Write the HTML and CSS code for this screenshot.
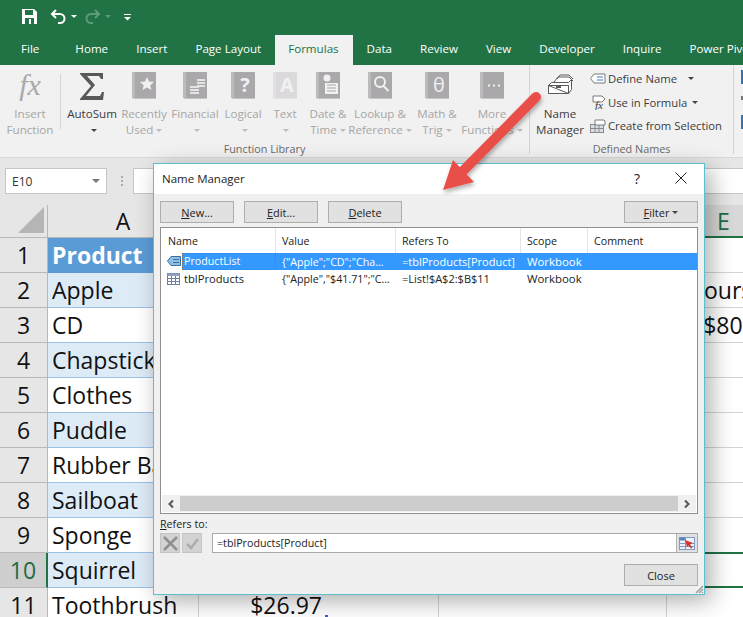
FILE: index.html
```html
<!DOCTYPE html>
<html lang="en">
<head>
<meta charset="utf-8">
<title>Name Manager</title>
<link rel="stylesheet" href="styles.css">
</head>
<body>
<header class="titlebar">
  <svg class="qa" width="140" height="35" viewBox="0 0 140 35">
    <path d="M22 9h12l3 3v12H22z" fill="#fff"/>
    <rect x="25" y="10" width="8" height="5" fill="#217346"/>
    <rect x="25" y="18" width="9" height="6" fill="#217346"/>
    <rect x="29" y="19" width="2" height="5" fill="#fff"/>
    <path d="M56 10l-4 4 4 4M52 14h8a4.500 4.500 0 0 1 0 9h-2" fill="none" stroke="#fff" stroke-width="2"/>
    <path d="M71 15h6l-3 3z" fill="#fff"/>
    <path d="M95 10l4 4-4 4M99 14h-8a4.500 4.500 0 0 0 0 9h2" fill="none" stroke="#5c9c78" stroke-width="2"/>
    <path d="M105 15h6l-3 3z" fill="#5c9c78"/>
    <rect x="124" y="14" width="7" height="1" fill="#fff"/>
    <path d="M124 17h7l-3.500 3.500z" fill="#fff"/>
  </svg>
  <nav class="tabs">
    <span class="tab tab-file">File</span>
    <span class="tab">Home</span>
    <span class="tab">Insert</span>
    <span class="tab">Page Layout</span>
    <span class="tab tab-active">Formulas</span>
    <span class="tab">Data</span>
    <span class="tab">Review</span>
    <span class="tab">View</span>
    <span class="tab">Developer</span>
    <span class="tab">Inquire</span>
    <span class="tab">Power Pivot</span>
  </nav>
</header>

<svg class="defs" width="0" height="0">
  <symbol id="book" viewBox="0 0 25 28">
    <rect x="0" y="0" width="3" height="26" fill="currentColor" opacity=".75"/>
    <rect x="3" y="0" width="21" height="26" fill="currentColor"/>
    <rect x="1" y="26" width="23" height="1" fill="currentColor" opacity=".6"/>
  </symbol>
</svg>

<section class="ribbon">
  <div class="group group-lib">
    <div class="buttons">
      <div class="big w-insert">
        <span class="fx">fx</span>
        <span class="lbl">Insert<br>Function</span>
      </div>
      <i class="sep-in"></i>
      <div class="big w-auto on">
        <svg class="ic" width="26" height="28" viewBox="0 0 26 28"><path d="M1 1h23v6h-2l-2-3H8l8 9-9 11h14l2-4h2l-1 8H1v-1l11-13L1 2z" fill="#595959"/></svg>
        <span class="lbl">AutoSum<br><b class="caret dark"></b></span>
      </div>
      <div class="big w-rec">
        <svg class="ic book" width="25" height="28" viewBox="0 0 25 28"><use href="#book"/><path d="M15 5l2 4.500 5 .5-3.700 3.200 1.100 4.800-4.400-2.600-4.400 2.600 1.100-4.800L8 10l5-.5z" fill="#f1f1f1"/></svg>
        <span class="lbl">Recently<br>Used<b class="caret"></b></span>
      </div>
      <div class="big w-fin">
        <svg class="ic book" width="25" height="28" viewBox="0 0 25 28"><use href="#book"/><path d="M14 7h8v2h-8zM14 10h8v2h-8zM14 13h8v2h-8zM7 14h9v2H7zM7 17h9v2H7zM7 20h9v2H7z" fill="#e4e4e4"/></svg>
        <span class="lbl">Financial<br><b class="caret"></b></span>
      </div>
      <div class="big w-log">
        <svg class="ic book" width="25" height="28" viewBox="0 0 25 28"><use href="#book"/><text x="14" y="20" class="ic-txt">?</text></svg>
        <span class="lbl">Logical<br><b class="caret"></b></span>
      </div>
      <div class="big w-text">
        <svg class="ic book light" width="25" height="28" viewBox="0 0 25 28"><use href="#book"/><text x="14" y="20" class="ic-txt">A</text></svg>
        <span class="lbl">Text<br><b class="caret"></b></span>
      </div>
      <div class="big w-date">
        <svg class="ic book" width="25" height="28" viewBox="0 0 25 28"><use href="#book"/><circle cx="11" cy="6" r="3.500" fill="#f1f1f1"/><rect x="9" y="11" width="13" height="11" fill="#f1f1f1"/><path d="M11 13h9M11 16h9M11 19h9" stroke="#a8a8a8"/></svg>
        <span class="lbl">Date &amp;<br>Time<b class="caret"></b></span>
      </div>
      <div class="big w-look">
        <svg class="ic book" width="25" height="28" viewBox="0 0 25 28"><use href="#book"/><circle cx="12" cy="10" r="5" fill="none" stroke="#f1f1f1" stroke-width="2"/><path d="M15.500 14l5 5" stroke="#f1f1f1" stroke-width="2"/></svg>
        <span class="lbl">Lookup &amp;<br>Reference<b class="caret"></b></span>
      </div>
      <div class="big w-math">
        <svg class="ic book" width="25" height="28" viewBox="0 0 25 28"><use href="#book"/><text x="14" y="20" class="ic-txt thin">θ</text></svg>
        <span class="lbl">Math &amp;<br>Trig<b class="caret"></b></span>
      </div>
      <div class="big w-more">
        <svg class="ic book" width="25" height="28" viewBox="0 0 25 28"><use href="#book"/><path d="M8 13.500h2M13 13.500h2M18 13.500h2" stroke="#f1f1f1" stroke-width="2"/></svg>
        <span class="lbl">More<br>Functions<b class="caret"></b></span>
      </div>
    </div>
    <div class="group-label">Function Library</div>
  </div>
  <div class="group group-names">
    <div class="buttons">
      <div class="big w-name on">
        <svg class="ic" width="30" height="28" viewBox="0 0 30 28"><path d="M3.500 13.500h20v8h-20zM3.500 13.500l3-3h17l3-3v10l-3 4zM9 10l4-5h11l4 4M12 7l3-4h9l4 4" fill="#fff" stroke="#595959"/><rect x="11" y="14" width="5" height="2" fill="#595959"/></svg>
        <span class="lbl">Name<br>Manager</span>
      </div>
      <ul class="small-list">
        <li class="small">
          <svg width="16" height="12" viewBox="0 0 16 12"><path d="M4 1h11v9H4L.5 5.500z" fill="#fff" stroke="#7a7a7a"/><path d="M7 4h6M7 7h6" stroke="#3a78c2"/></svg>
          <span>Define Name</span><b class="caret dark gap"></b>
        </li>
        <li class="small">
          <svg width="16" height="15" viewBox="0 0 16 15"><path d="M3 1h9l3 3-3 3H3z" fill="#fff" stroke="#7a7a7a"/><text x="5" y="14" class="mini-fx">fx</text></svg>
          <span>Use in Formula</span><b class="caret dark"></b>
        </li>
        <li class="small">
          <svg width="16" height="14" viewBox="0 0 16 14"><rect x=".5" y="5.500" width="13" height="8" fill="#d9dfe6" stroke="#8a8a8a"/><path d="M5 5.500v8M9 5.500v8M.5 9.500h13" stroke="#8a8a8a"/><path d="M5 1h9l1 1v4H5z" fill="#fff" stroke="#7a7a7a"/></svg>
          <span>Create from Selection</span>
        </li>
      </ul>
    </div>
    <div class="group-label">Defined Names</div>
  </div>
  <div class="group group-cut">
    <i class="blue-a"></i><i class="blue-b"></i><i class="blue-c"></i>
  </div>
</section>

<section class="formula-bar">
  <div class="name-box"><span>E10</span><b class="caret grey"></b></div>
  <i class="grip"></i>
  <div class="formula-input"></div>
</section>

<section class="sheet">
  <div class="col-head corner"><i></i></div><div class="col-head">A</div><div class="col-head"></div><div class="col-head"></div><div class="col-head sel-col">E</div>

  <div class="row-head">1</div><div class="cell th">Product</div><div class="cell"></div><div class="cell"></div><div class="cell"></div>
  <div class="row-head">2</div><div class="cell band">Apple</div><div class="cell"></div><div class="cell"></div><div class="cell hours">Hours</div>
  <div class="row-head">3</div><div class="cell plain">CD</div><div class="cell"></div><div class="cell"></div><div class="cell num">$80.00</div>
  <div class="row-head">4</div><div class="cell band">Chapstick</div><div class="cell"></div><div class="cell"></div><div class="cell"></div>
  <div class="row-head">5</div><div class="cell plain">Clothes</div><div class="cell"></div><div class="cell"></div><div class="cell"></div>
  <div class="row-head">6</div><div class="cell band">Puddle</div><div class="cell"></div><div class="cell"></div><div class="cell"></div>
  <div class="row-head">7</div><div class="cell plain">Rubber Ball</div><div class="cell"></div><div class="cell"></div><div class="cell"></div>
  <div class="row-head">8</div><div class="cell band">Sailboat</div><div class="cell"></div><div class="cell"></div><div class="cell"></div>
  <div class="row-head">9</div><div class="cell plain">Sponge</div><div class="cell"></div><div class="cell"></div><div class="cell above-sel"></div>
  <div class="row-head sel-row">10</div><div class="cell band">Squirrel</div><div class="cell"></div><div class="cell"></div><div class="cell selected"></div>
  <div class="row-head">11</div><div class="cell plain">Toothbrush</div><div class="cell num price">$26.97<i class="handle"></i></div><div class="cell"></div><div class="cell"></div>
</section>

<div class="dialog">
  <div class="dlg-title">
    <span class="dlg-name">Name Manager</span>
    <span class="dlg-help">?</span>
    <svg class="dlg-close" width="12" height="12" viewBox="0 0 12 12"><path d="M.5.500l11 11M11.500.500l-11 11" stroke="#222" fill="none"/></svg>
  </div>
  <div class="dlg-body">
    <div class="dlg-actions">
      <span class="btn"><u>N</u>ew...</span>
      <span class="btn"><u>E</u>dit...</span>
      <span class="btn"><u>D</u>elete</span>
      <span class="btn btn-filter"><u>F</u>ilter<b class="caret dark"></b></span>
    </div>
    <div class="list">
      <div class="list-row list-head">
        <span class="c1">Name</span><span class="c2">Value</span><span class="c3">Refers To</span><span class="c4">Scope</span><span class="c5">Comment</span>
      </div>
      <div class="list-row item active">
        <svg class="item-ic" width="14" height="10" viewBox="0 0 14 10"><path d="M4 .5h9.500v9H4L.5 5z" fill="#8cc0e8" stroke="#3f6f96"/><path d="M6 3.500h6M6 6.500h6" stroke="#3f6f96"/></svg>
        <span class="c1 sel-name">ProductList</span><span class="c2">{"Apple";"CD";"Cha...</span><span class="c3">=tblProducts[Product]</span><span class="c4">Workbook</span><span class="c5"></span>
      </div>
      <div class="list-row item">
        <svg class="item-ic" width="13" height="12" viewBox="0 0 13 12"><rect x=".5" y=".5" width="12" height="11" fill="#fff" stroke="#6b7fa0"/><rect x=".5" y=".5" width="12" height="2.500" fill="#8fa3c4"/><path d="M4.500 3v8M8.500 3v8M1 5.500h11M1 8.500h11" stroke="#6b7fa0"/></svg>
        <span class="c1 wide">tblProducts</span><span class="c2">{"Apple","$41.71";"C...</span><span class="c3">=List!$A$2:$B$11</span><span class="c4">Workbook</span><span class="c5"></span>
      </div>
      <div class="hscroll">
        <svg width="18" height="16" viewBox="0 0 18 16"><path d="M11 4.500L7.500 8 11 11.500" fill="none" stroke="#555" stroke-width="2"/></svg>
        <i class="thumb"></i>
        <svg width="18" height="16" viewBox="0 0 18 16"><path d="M7 4.500L10.500 8 7 11.500" fill="none" stroke="#555" stroke-width="2"/></svg>
      </div>
    </div>
    <div class="refers-label"><u>R</u>efers to:</div>
    <div class="refers">
      <span class="tool"><svg width="15" height="15" viewBox="0 0 15 15"><path d="M1 1l13 13M14 1L1 14" stroke="#8f8f8f" stroke-width="2.500"/></svg></span>
      <span class="tool"><svg width="15" height="15" viewBox="0 0 15 15"><path d="M2 8l4 4 7-9" fill="none" stroke="#adadad" stroke-width="2.500"/></svg></span>
      <div class="ref-input">
        <span>=tblProducts[Product]</span>
        <span class="ref-btn"><svg width="16" height="13" viewBox="0 0 16 13"><rect x=".5" y=".5" width="15" height="12" fill="#eef2f8" stroke="#7f9ac8"/><rect x=".5" y=".5" width="6" height="3" fill="#5b7fc0"/><path d="M1 6.500h14M1 9.500h14M6.500 1v11" stroke="#7f9ac8"/><path d="M6 3l8 3-3 1.500 2.500 3-1.500 1-2.500-3L8 10z" fill="#d9352a"/></svg></span>
      </div>
    </div>
    <div class="dlg-foot"><span class="btn">Close</span></div>
    <svg class="size-grip" width="10" height="10" viewBox="0 0 10 10"><path d="M9 2L2 9M9 5L5 9M9 8L8 9" stroke="#a0a0a0" stroke-width="1.500"/></svg>
  </div>
</div>

<svg class="arrow" width="743" height="220" viewBox="0 0 743 220">
  <defs><filter id="ash" x="-20%" y="-20%" width="150%" height="150%"><feDropShadow dx="1" dy="3" stdDeviation="2" flood-color="#000" flood-opacity=".3"/></filter></defs>
  <g filter="url(#ash)">
    <path d="M536 97L463 171" stroke="#e9504a" stroke-width="10" stroke-linecap="round" fill="none"/>
    <path d="M443 190L453 160 474 182z" fill="#e9504a"/>
  </g>
</svg>
</body>
</html>
```
FILE: styles.css
```css
* { box-sizing: border-box; }
html, body { margin: 0; height: 617px; width: 743px; overflow: hidden; }
body { position: relative; font-family: "Open Sans", "Liberation Sans", sans-serif; background: #fff; color: #222; }
ul { list-style: none; margin: 0; padding: 0; }
.defs { position: absolute; }

/* title + tabs */
.titlebar { height: 65px; background: #217346; display: flex; flex-direction: column; }
.qa { display: block; flex: none; height: 35px; }
.tabs { display: flex; height: 30px; color: #fff; font-size: 11.6px; white-space: nowrap; }
.tab { padding: 6px 14px 0; }
.tab-file { padding-left: 21px; padding-right: 22px; }
.tab-active { background: #f1f1f1; color: #217346; padding: 6px 14px 0 13px; }

/* ribbon */
.ribbon { height: 93px; background: #f1f1f1; border-bottom: 1px solid #d8d8d8; display: flex; font-size: 11.6px; color: #a6a6a6; }
.group { display: flex; flex-direction: column; position: relative; padding-bottom: 2px; }
.group-lib { width: 530px; border-right: 1px solid #d4d4d4; margin-bottom: 3px; padding-top: 7px; }
.group-names { width: 204px; border-right: 1px solid #d4d4d4; margin-bottom: 3px; padding-top: 7px; }
.buttons { display: flex; height: 70px; }
.group-label { text-align: center; color: #6a6a6a; font-size: 10.8px; line-height: 14px; margin-top: 4px; }
.big { display: flex; flex-direction: column; align-items: center; flex: none; }
.ic { display: block; height: 28px; flex: none; }
.fx { height: 28px; font: italic 30px/26px "Liberation Serif", serif; color: #a9a9a9; }
.lbl { margin-top: 6px; text-align: center; line-height: 16px; white-space: nowrap; }
.on .lbl { color: #3c3c3c; }
.w-insert { width: 60px; }
.sep-in { width: 1px; height: 55px; margin-top: 2px; background: #d4d4d4; flex: none; }
.w-auto { width: 62px; }
.w-rec { width: 42px; }
.w-fin { width: 60px; }
.w-log { width: 36px; }
.w-text { width: 48px; }
.w-date { width: 38px; }
.w-look { width: 66px; }
.w-math { width: 48px; }
.w-more { width: 62px; }
.w-name { width: 60px; }
.book { color: #aaa8aa; }
.book.light { color: #dcd9dc; }
.ic-txt { font: bold 20px "Open Sans", sans-serif; fill: #f1f1f1; text-anchor: middle; }
.ic-txt.thin { font-weight: 400; }
.mini-fx { font: italic 11px "Liberation Serif", serif; fill: #333; }
.caret { display: inline-block; width: 0; height: 0; border: 3px solid transparent; border-top: 3px solid #bcbcbc; border-bottom: 0; margin-left: 3px; vertical-align: middle; }
.caret.dark { border-top-color: #444; }
.caret.grey { border-top-color: #777; border-width: 4px 4px 0; }
.caret.gap { margin-left: 9px; }
.small-list { display: flex; flex-direction: column; gap: 4.5px; color: #3c3c3c; margin-top: -3px; font-size: 11.3px; }
.small { display: flex; align-items: center; gap: 2px; height: 19px; white-space: nowrap; }
.small svg { flex: none; }
.group-cut { width: 9px; }
.group-cut i { position: absolute; left: 7px; background: #2f75b5; width: 3px; }
.blue-a { top: 5px; height: 14px; }
.blue-b { top: 31px; height: 4px; background: #777 !important; }
.blue-c { top: 50px; height: 14px; }

/* formula bar */
.formula-bar { height: 47px; background: #e6e6e6; display: flex; align-items: flex-start; padding: 10px 0 0 5px; }
.name-box { width: 102px; height: 26px; background: #fff; border: 1px solid #c6c6c6; display: flex; align-items: center; justify-content: space-between; padding: 0 6px; font-size: 12px; color: #333; }
.grip { width: 2px; height: 10px; margin: 8px 10px 0 14px; border-left: 2px dotted #aaa; }
.formula-input { flex: 1; height: 26px; background: #fff; border: 1px solid #c6c6c6; border-right: 0; }

/* sheet */
.sheet { display: grid; grid-template-columns: 48px 151px 240px 228px 114px; grid-template-rows: 33px repeat(11, 35px); font-size: 23px; color: #111; }
.col-head, .row-head { background: #e6e6e6; display: flex; align-items: center; justify-content: center; border-right: 1px solid #b8b8b8; border-bottom: 1px solid #b8b8b8; }
.corner { position: relative; padding: 0; }
.corner i { position: absolute; right: 3px; bottom: 4px; width: 0; height: 0; border-style: solid; border-width: 0 0 26px 26px; border-color: transparent transparent #b5b5b5 transparent; }
.sel-col { background: #d8d8d8; color: #1f6b43; border-bottom: 2px solid #217346; justify-content: flex-start; padding-left: 50px; }
.sel-row { background: #cfcfcf; color: #1f6b43; border-right: 2px solid #217346; }
.cell { border-right: 1px solid #d4d4d4; border-bottom: 1px solid #d4d4d4; display: flex; align-items: center; padding: 0 0 0 4px; white-space: nowrap; overflow: visible; }
.th { background: #5b9bd5; color: #fff; font-weight: 700; border-color: #5b9bd5; }
.band { background: #ddebf7; border-color: #9bc2e6; border-right-color: #ddebf7; }
.plain { border-bottom-color: #9bc2e6; }
.num { justify-content: flex-end; padding: 0 5px 0 0; }
.price { padding-right: 116px; position: relative; }
.handle { position: absolute; left: 126px; top: 27px; width: 3px; height: 3px; background: #3f5fbf; }
.hours { padding-left: 20px; }
.above-sel { border-bottom: 0; }
.selected { border-top: 2px solid #217346; border-bottom: 2px solid #217346; border-right: 0; height: 36px; margin-top: -1px; }

/* dialog */
.dialog { position: absolute; left: 153px; top: 163px; width: 552px; height: 432px; border: 1px solid #5cbfcc; background: #f0f0f0; box-shadow: 6px 6px 22px rgba(0, 0, 0, .32); display: flex; flex-direction: column; font-size: 10.7px; color: #222; }
.dlg-title { height: 30px; background: #fff; flex: none; display: flex; align-items: center; padding: 0 17px 2px 8px; font-size: 11.5px; }
.dlg-name { flex: 1; }
.dlg-help { font-size: 14px; margin-right: 35px; }
.dlg-body { flex: 1; position: relative; display: flex; flex-direction: column; padding: 7px 6px 0; }
.dlg-actions { display: flex; gap: 10px; height: 22px; flex: none; }
.btn { width: 74px; height: 22px; background: #e1e1e1; border: 1px solid #adadad; display: flex; align-items: center; justify-content: center; font-size: 11px; }
.btn-filter { margin-left: auto; margin-right: 0; }
.btn-filter .caret { margin-left: 3px; }
.list { height: 287px; margin-top: 4px; background: #fff; border: 1px solid #8f8f8f; position: relative; flex: none; display: flex; flex-direction: column; }
.list-row { display: flex; align-items: center; height: 17px; position: relative; }
.list-head { height: 25px; }
.list-head span { height: 25px; line-height: 27px; border-right: 1px solid #e5e5e5; }
.c1 { width: 115px; padding-left: 7px; flex: none; }
.c2 { width: 120px; padding-left: 6px; flex: none; white-space: nowrap; overflow: hidden; }
.c3 { width: 125px; padding-left: 6px; flex: none; white-space: nowrap; font-size: 11px; }
.c4 { width: 67px; padding-left: 6px; flex: none; font-size: 11.4px; }
.list-head .c3, .list-head .c4 { font-size: 10.7px; }
.c5 { flex: 1; padding-left: 6px; }
.list-head .c5 { border-right: 0; }
.item .c1 { padding-left: 23px; }
.item .wide { font-size: 11.2px; }
.item-ic { position: absolute; left: 6px; top: 3px; }
.active { background: #3399ff; color: #fff; margin-left: 21px; }
.active .c1 { padding-left: 2px; width: 94px; outline: 1px dotted #b56a22; outline-offset: -1px; height: 17px; line-height: 17px; }
.active .item-ic { left: -15px; top: 3px; }
.hscroll { height: 17px; display: flex; align-items: center; background: #f0f0f0; margin: auto 1px 1px; }
.thumb { flex: 1; height: 15px; background: #cdcdcd; }
.refers-label { margin-top: 3px; height: 15px; line-height: 15px; flex: none; }
.refers { display: flex; align-items: stretch; gap: 2px; height: 20px; flex: none; margin-top: 1px; }
.tool { width: 20px; background: #d3d3d3; border: 1px solid #c4c4c4; display: flex; align-items: center; justify-content: center; }
.ref-input { flex: 1; margin-left: 8px; background: #fff; border: 1px solid #a8a8a8; display: flex; align-items: center; justify-content: space-between; padding-left: 4px; }
.ref-btn { width: 21px; height: 18px; background: #e1e1e1; border-left: 1px solid #b5b5b5; display: flex; align-items: center; justify-content: center; }
.dlg-foot { display: flex; justify-content: flex-end; margin-top: 11px; flex: none; }
.size-grip { position: absolute; right: 0; bottom: 0; }

.arrow { position: absolute; left: 0; top: 0; pointer-events: none; }
```
